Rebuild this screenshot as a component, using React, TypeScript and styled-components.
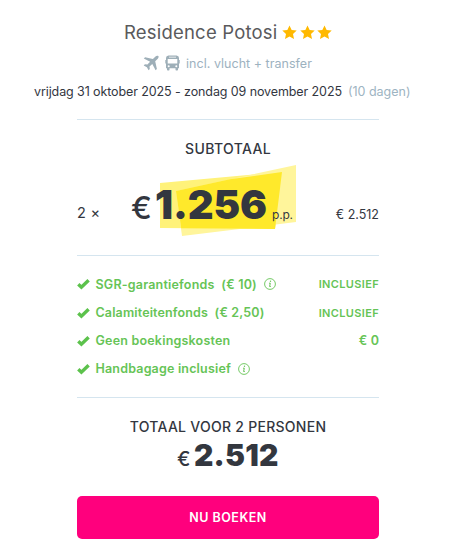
import React from "react";
import styled, { createGlobalStyle } from "styled-components";

const Global = createGlobalStyle`
  * { box-sizing: border-box; }
  body { margin: 0; background: #fff; color: #33373f; font-family: Inter, "Liberation Sans", sans-serif; }
  h1, h2, p, ul { margin: 0; padding: 0; font-weight: inherit; }
  svg { display: block; flex: none; }
`;

const Card = styled.main`
  width: 450px;
  height: 552px;
  padding-top: 20px;
  overflow: hidden;
  background: #fff;
`;
const Header = styled.header`
  height: 99px;
`;
const TitleRow = styled.div`
  display: flex;
  align-items: center;
  height: 24px;
  padding-left: 124px;
`;
const Title = styled.h1`
  width: 158px;
  font-size: 18.5px;
  line-height: 24px;
  letter-spacing: 0.2px;
  color: #5a5a5c;
  white-space: nowrap;
`;
const Stars = styled.div`
  display: flex;
  gap: 2.5px;
`;
const TravelRow = styled.div`
  display: flex;
  align-items: center;
  height: 18px;
  margin-top: 10px;
  padding-left: 143px;
  color: #9eafb8;
`;
const TravelText = styled.span`
  margin-left: 6px;
  font-size: 12.5px;
  letter-spacing: 0.03px;
  color: #9db2bf;
  white-space: nowrap;
`;
const BusIcon = styled.svg`
  margin-left: 6px;
`;
const Dates = styled.p`
  display: flex;
  margin-top: 11px;
  padding-left: 34px;
  font-size: 12.5px;
  line-height: 18px;
  letter-spacing: -0.1px;
  white-space: nowrap;
`;
const Days = styled.span`
  margin-left: 6px;
  color: #9db4c2;
  letter-spacing: 0;
`;
const Section = styled.section<{ $height: number }>`
  width: 302px;
  height: ${(p) => p.$height}px;
  margin-left: 77px;
  border-top: 1px solid #d5e5ef;
`;
const SectionTitle = styled.h2<{ $top: number; $spacing: number }>`
  padding-top: ${(p) => p.$top}px;
  font-size: 14px;
  font-weight: 500;
  line-height: 20px;
  letter-spacing: ${(p) => p.$spacing}px;
  text-align: center;
  white-space: nowrap;
`;
const PriceRow = styled.div`
  display: flex;
  height: 76px;
  margin-top: 5px;
`;
const Quantity = styled.span`
  width: 54px;
  padding-top: 39px;
  font-size: 14.5px;
  line-height: 20px;
  letter-spacing: 0.3px;
  white-space: pre;
`;
const PriceBox = styled.div`
  position: relative;
  width: 165px;
  height: 76px;
  white-space: nowrap;
`;
const Highlight = styled.svg`
  position: absolute;
  left: 29px;
  top: 0;
`;
const PriceLine = styled.div`
  position: relative;
  display: flex;
  align-items: baseline;
  padding-top: 15px;
  line-height: 52px;
`;
const Euro = styled.span<{ $size: number; $width: number }>`
  width: ${(p) => p.$width}px;
  font-size: ${(p) => p.$size}px;
  font-weight: 500;
`;
const Amount = styled.strong<{ $size: number; $spacing: number }>`
  font-size: ${(p) => p.$size}px;
  font-weight: 900;
  letter-spacing: ${(p) => p.$spacing}px;
`;
const PerPerson = styled.span`
  margin-left: 5px;
  font-size: 12px;
  letter-spacing: -0.2px;
`;
const LineTotal = styled.span`
  margin-left: auto;
  padding-top: 42px;
  font-size: 12.5px;
  line-height: 18px;
  white-space: nowrap;
`;
const Perks = styled.ul`
  padding-top: 14.4px;
  list-style: none;
`;
const Perk = styled.li`
  display: flex;
  align-items: center;
  height: 28.1px;
  color: #66c456;
  font-size: 12.5px;
  font-weight: 600;
`;
const PerkName = styled.span<{ $spacing: number }>`
  margin-left: 5.5px;
  margin-right: 7px;
  letter-spacing: ${(p) => p.$spacing}px;
  white-space: pre;
`;
const PerkValue = styled.span<{ $small?: boolean }>`
  margin-left: auto;
  font-size: ${(p) => (p.$small ? 11 : 12.5)}px;
  letter-spacing: ${(p) => (p.$small ? 0.35 : 0.1)}px;
`;
const TotalLine = styled.div`
  display: flex;
  align-items: baseline;
  padding-left: 100px;
  line-height: 36px;
  white-space: nowrap;
`;
const BookButton = styled.button`
  display: block;
  width: 302px;
  height: 43px;
  margin-left: 77px;
  padding: 0;
  border: 0;
  border-radius: 5px;
  background: #ff007d;
  color: #fff;
  font: 600 12.5px/43px Inter, sans-serif;
  letter-spacing: 0.5px;
`;

const Star = () => (
  <svg width="15" height="15" viewBox="0 0 15 15">
    <path fill="#ffb900" d="M7.5 .4 9.65 5 14.7 5.6 11 9.05 12 14.1 7.5 11.6 3 14.1 4 9.05 .3 5.6 5.35 5Z" />
  </svg>
);
const Plane = () => (
  <svg width="16" height="16" viewBox="0 0 16 16">
    <path fill="currentColor" d="M15.3 1.1c-.8-.7-2.1-.3-2.8.4L9.9 4 2.1 2.2.8 3.5l6.3 3.3-2.7 2.8-2.5-.3-1.2 1.2 3.2 1.7 1.7 3.1 1.2-1.2-.3-2.5 2.8-2.7 3.3 6.3 1.3-1.3L12.2 6.3l2.6-2.5c.7-.7 1.2-2 .5-2.7Z" />
  </svg>
);
const Bus = () => (
  <BusIcon width="15" height="17" viewBox="0 0 15 17">
    <path fill="currentColor" fillRule="evenodd" d="M3.5.5h8Q14 .8 14 3v10.2h-1v1.5q0 .8-.8.8h-.9q-.8 0-.8-.8v-1.5h-6v1.5q0 .8-.8.8h-.9q-.8 0-.8-.8v-1.5H1V3Q1 .8 3.5.5ZM4 1.7v.8h7v-.8ZM2.7 4v4.5h9.6V4Zm1 6.200a1 1 0 1 0 0 2 1 1 0 0 0 0-2Zm7.6 0a1 1 0 1 0 0 2 1 1 0 0 0 0-2ZM0 5h.7v3.5H0Zm14.3 0h.7v3.5h-.7Z" />
  </BusIcon>
);
const Check = () => (
  <svg width="13" height="12" viewBox="0 0 13 12">
    <path d="m1.3 6.3 3.1 2.9 7.2-7" fill="none" stroke="#5cc24c" strokeWidth="3.4" />
  </svg>
);
const Info = () => (
  <svg width="12" height="12" viewBox="0 0 12 12" fill="none" stroke="#66c456">
    <circle cx="6" cy="6" r="5.4" strokeWidth=".9" />
    <path d="m5 5.200h1.300L5.600 8.500h1.200" strokeWidth="1" />
    <circle cx="6.5" cy="3.3" r=".7" fill="#66c456" stroke="none" />
  </svg>
);

const perks = [
  { name: "SGR-garantiefonds  (€ 10)", spacing: 0.2, info: true, value: "INCLUSIEF", small: true },
  { name: "Calamiteitenfonds  (€ 2,50)", spacing: 0.14, value: "INCLUSIEF", small: true },
  { name: "Geen boekingskosten", spacing: 0.2, value: "€ 0" },
  { name: "Handbagage inclusief", spacing: 0.18, info: true },
];

export default function App() {
  return (
    <>
      <Global />
      <Card>
        <Header>
          <TitleRow>
            <Title>Residence Potosi</Title>
            <Stars><Star /><Star /><Star /></Stars>
          </TitleRow>
          <TravelRow>
            <Plane />
            <Bus />
            <TravelText>incl. vlucht + transfer</TravelText>
          </TravelRow>
          <Dates>
            vrijdag 31 oktober 2025 - zondag 09 november 2025
            <Days>(10 dagen)</Days>
          </Dates>
        </Header>
        <Section $height={136}>
          <SectionTitle $top={19} $spacing={0.35}>SUBTOTAAL</SectionTitle>
          <PriceRow>
            <Quantity>2 ×</Quantity>
            <PriceBox>
              <Highlight width="137" height="74" viewBox="160 165 137 74">
                <path fill="#fff27a" d="M160 184 282 173 275 230 160 229Z" />
                <path fill="#fff59b" d="M176 192 296 166V223L182 237Z" />
                <path fill="#ffe92b" d="M176 192 230 180.3 282 173 275 230 181.2 229.2Z" />
              </Highlight>
              <PriceLine>
                <Euro $size={31} $width={24}>€</Euro>
                <Amount $size={40} $spacing={-0.1}>1.256</Amount>
                <PerPerson>p.p.</PerPerson>
              </PriceLine>
            </PriceBox>
            <LineTotal>€ 2.512</LineTotal>
          </PriceRow>
        </Section>
        <Section $height={142}>
          <Perks>
            {perks.map((perk) => (
              <Perk key={perk.name}>
                <Check />
                <PerkName $spacing={perk.spacing}>{perk.name}</PerkName>
                {perk.info && <Info />}
                {perk.value && <PerkValue $small={perk.small}>{perk.value}</PerkValue>}
              </Perk>
            ))}
          </Perks>
        </Section>
        <Section $height={99}>
          <SectionTitle $top={19} $spacing={0.27}>TOTAAL VOOR 2 PERSONEN</SectionTitle>
          <TotalLine>
            <Euro $size={20} $width={17}>€</Euro>
            <Amount $size={30} $spacing={0.2}>2.512</Amount>
          </TotalLine>
        </Section>
        <BookButton>NU BOEKEN</BookButton>
      </Card>
    </>
  );
}
